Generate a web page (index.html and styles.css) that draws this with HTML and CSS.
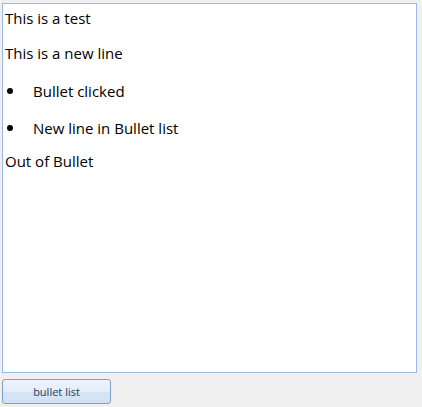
FILE: index.html
```html
<!DOCTYPE html>
<html>
<head>
<meta charset="utf-8">
<link rel="stylesheet" href="styles.css">
</head>
<body>
<div class="app">
  <div class="editor">
    <p class="line first">This is a test</p>
    <p class="line">This is a new line</p>
    <ul class="bullets">
      <li class="item"><span class="dot"></span><span>Bullet clicked</span></li>
      <li class="item"><span class="dot"></span><span>New line in Bullet list</span></li>
    </ul>
    <p class="line out">Out of Bullet</p>
  </div>
  <button class="btn">bullet list</button>
</div>
</body>
</html>
```
FILE: styles.css
```css
html, body {
  margin: 0;
  padding: 0;
  background: #f0f0f0;
}
.app {
  width: 422px;
  height: 407px;
  display: flex;
  flex-direction: column;
  align-items: flex-start;
  padding: 3px 0 0 2px;
  box-sizing: border-box;
}
.editor {
  width: 415px;
  height: 370px;
  box-sizing: border-box;
  background: #fff;
  border: 1px solid #99b9e6;
  padding: 0 2px;
  font-family: "Open Sans", "Noto Sans", sans-serif;
  font-size: 15px;
  color: #000;
}
.line {
  margin: 0;
  height: 20px;
  line-height: 20px;
  white-space: nowrap;
}
.first { margin-top: 4px; }
.line + .line { margin-top: 15px; }
.bullets {
  list-style: none;
  margin: 18px 0 0 0;
  padding: 0;
}
.item {
  display: flex;
  align-items: center;
  height: 20px;
  line-height: 20px;
  margin-bottom: 17px;
}
.dot {
  width: 6px;
  height: 6px;
  border-radius: 50%;
  background: #000;
  margin: 0 20px 0 2px;
}
.out { margin-top: -4px; }
.btn {
  margin-top: 6px;
  width: 109px;
  height: 25px;
  border: 1px solid #7f9fcf;
  border-radius: 3px;
  background: linear-gradient(to bottom, #ecf3fc 0%, #e4eefa 50%, #d6e5f6 51%, #d2e2f4 100%);
  font-family: "Open Sans", "Noto Sans", sans-serif;
  font-size: 11px;
  color: #1e3a6e;
  padding: 0;
}
```
